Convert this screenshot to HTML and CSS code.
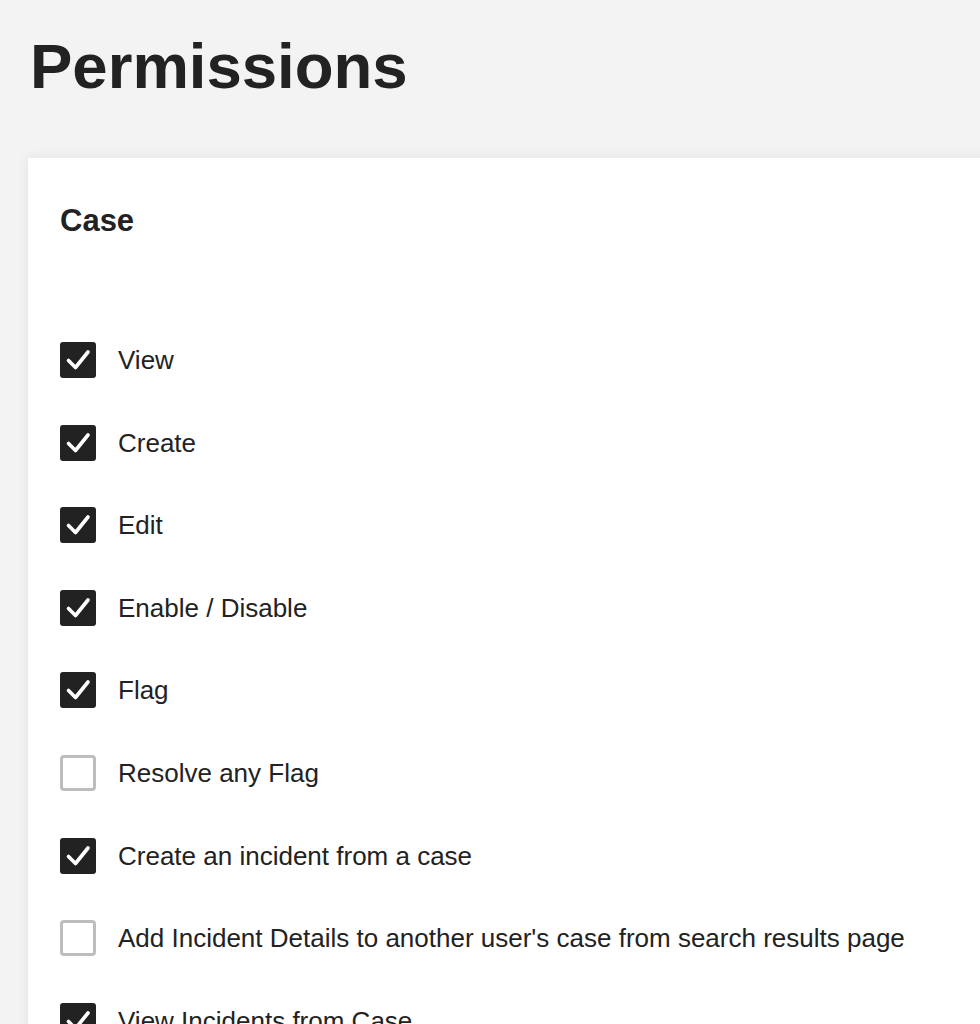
FILE: index.html
```html
<!DOCTYPE html>
<html lang="en">
<head>
    <title>Permissions</title>
    <link rel="stylesheet" href="styles.css">
</head>
<body>
    <div class="page">
        <h1>Permissions</h1>

        <div class="card">
            <h2>Case</h2>

            <div class="perm-list">
                <label class="perm">
                    <svg class="box" viewBox="0 0 36 36"><rect width="36" height="36" rx="3" fill="#222"/><polyline points="8.5,18.5 15.5,25.5 28,10" fill="none" stroke="#fff" stroke-width="3.6" stroke-linecap="round" stroke-linejoin="round"/></svg>
                    <span>View</span>
                </label>
                <label class="perm">
                    <svg class="box" viewBox="0 0 36 36"><rect width="36" height="36" rx="3" fill="#222"/><polyline points="8.5,18.5 15.5,25.5 28,10" fill="none" stroke="#fff" stroke-width="3.6" stroke-linecap="round" stroke-linejoin="round"/></svg>
                    <span>Create</span>
                </label>
                <label class="perm">
                    <svg class="box" viewBox="0 0 36 36"><rect width="36" height="36" rx="3" fill="#222"/><polyline points="8.5,18.5 15.5,25.5 28,10" fill="none" stroke="#fff" stroke-width="3.6" stroke-linecap="round" stroke-linejoin="round"/></svg>
                    <span>Edit</span>
                </label>
                <label class="perm">
                    <svg class="box" viewBox="0 0 36 36"><rect width="36" height="36" rx="3" fill="#222"/><polyline points="8.5,18.5 15.5,25.5 28,10" fill="none" stroke="#fff" stroke-width="3.6" stroke-linecap="round" stroke-linejoin="round"/></svg>
                    <span>Enable / Disable</span>
                </label>
                <label class="perm">
                    <svg class="box" viewBox="0 0 36 36"><rect width="36" height="36" rx="3" fill="#222"/><polyline points="8.5,18.5 15.5,25.5 28,10" fill="none" stroke="#fff" stroke-width="3.6" stroke-linecap="round" stroke-linejoin="round"/></svg>
                    <span>Flag</span>
                </label>
                <label class="perm">
                    <svg class="box" viewBox="0 0 36 36"><rect x="1.5" y="1.5" width="33" height="33" rx="2.5" fill="#fff" stroke="#bdbdbd" stroke-width="3"/></svg>
                    <span>Resolve any Flag</span>
                </label>
                <label class="perm">
                    <svg class="box" viewBox="0 0 36 36"><rect width="36" height="36" rx="3" fill="#222"/><polyline points="8.5,18.5 15.5,25.5 28,10" fill="none" stroke="#fff" stroke-width="3.6" stroke-linecap="round" stroke-linejoin="round"/></svg>
                    <span>Create an incident from a case</span>
                </label>
                <label class="perm">
                    <svg class="box" viewBox="0 0 36 36"><rect x="1.5" y="1.5" width="33" height="33" rx="2.5" fill="#fff" stroke="#bdbdbd" stroke-width="3"/></svg>
                    <span>Add Incident Details to another user's case from search results page</span>
                </label>
                <label class="perm">
                    <svg class="box" viewBox="0 0 36 36"><rect width="36" height="36" rx="3" fill="#222"/><polyline points="8.5,18.5 15.5,25.5 28,10" fill="none" stroke="#fff" stroke-width="3.6" stroke-linecap="round" stroke-linejoin="round"/></svg>
                    <span>View Incidents from Case</span>
                </label>
            </div>
        </div>
    </div>
</body>
</html>
```

FILE: styles.css
```css
html { overflow: hidden; }
body { margin: 0; background: #f3f3f3; color: #222; font-family: "Liberation Sans", Arial, Helvetica, sans-serif; }
.page { padding: 35px 0 0 28px; }
h1 { font-size: 63.5px; line-height: 1; margin: 0 0 59.5px 2px; font-weight: bold; }
.card {
    background: #fff;
    box-shadow: 0 0 12px rgba(0, 0, 0, 0.08);
    padding: 47px 0 60px 32px;
    margin-right: -40px;
}
h2 { font-size: 31px; line-height: 1; margin: 0 0 106px; font-weight: bold; }
.perm-list { display: flex; flex-direction: column; gap: 46.6px; }
.perm { display: flex; align-items: center; gap: 22px; font-size: 26px; line-height: 36px; }
.box { width: 36px; height: 36px; flex: none; display: block; }
```
